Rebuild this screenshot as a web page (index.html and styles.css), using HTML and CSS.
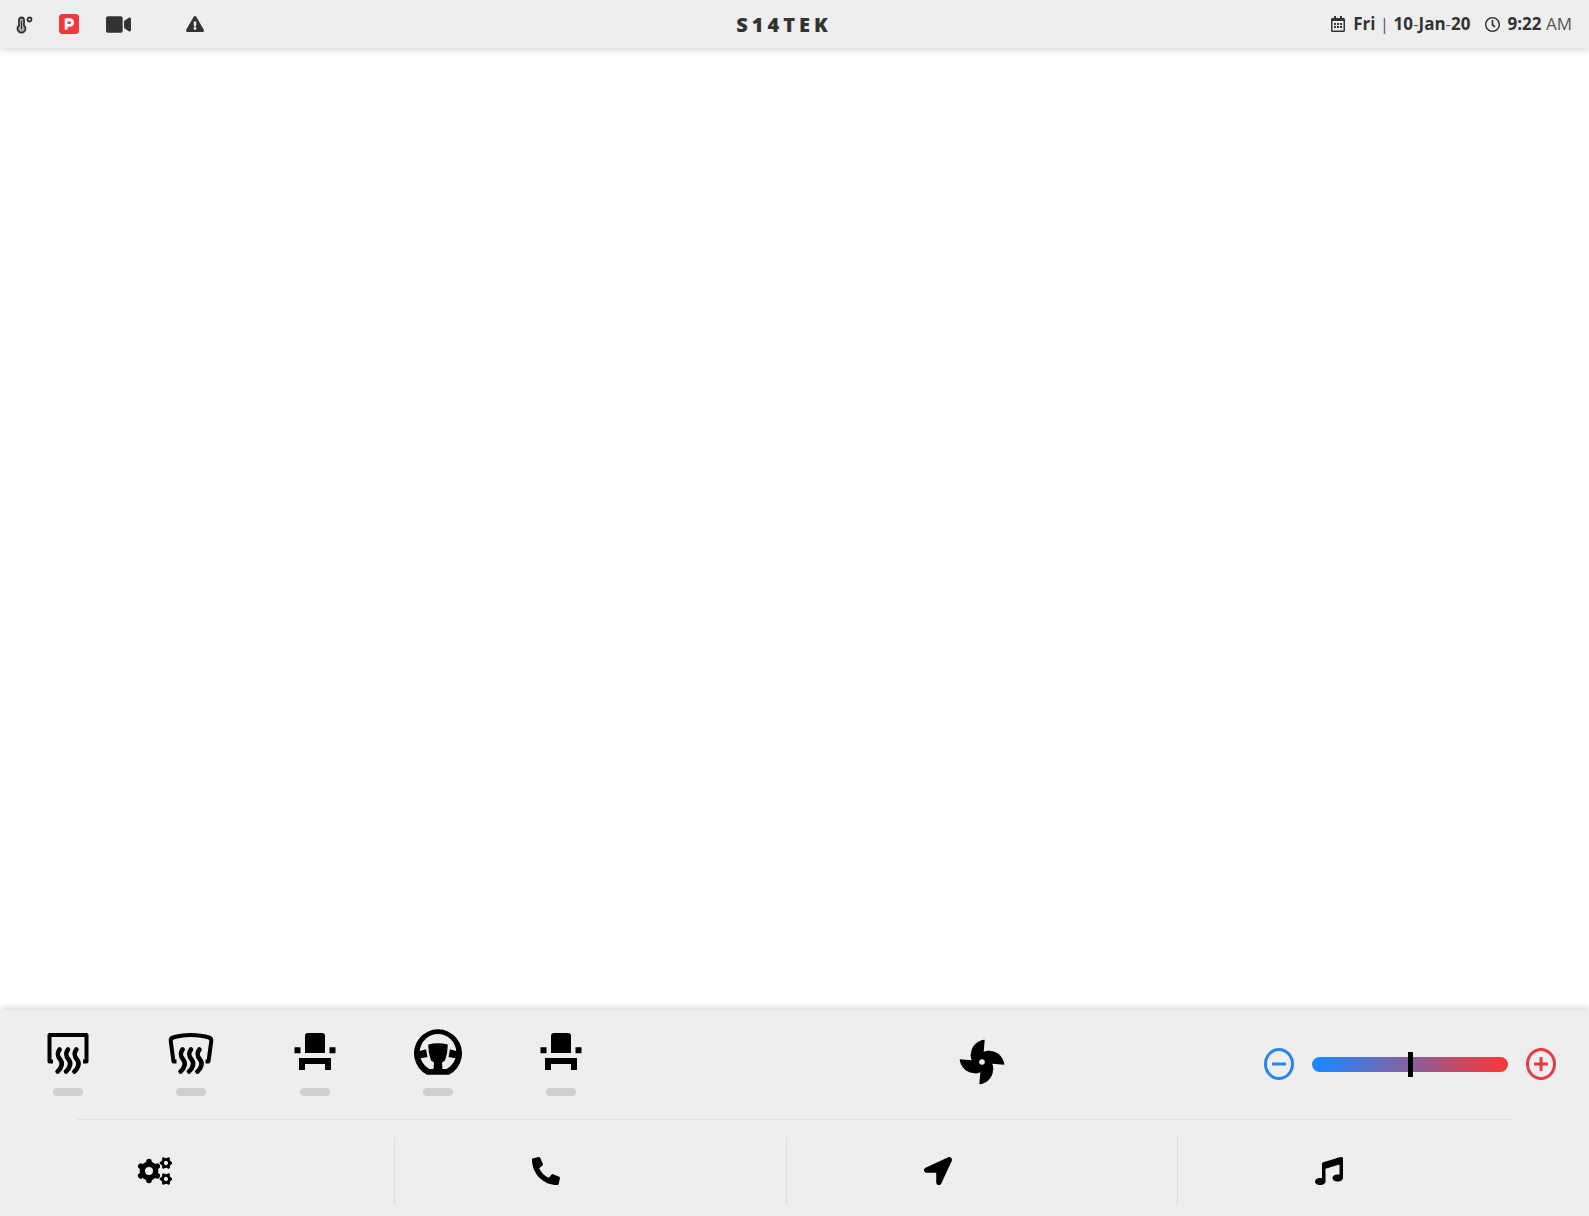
FILE: index.html
```html
<!DOCTYPE html>
<html lang="en">
<head>
<meta charset="utf-8">
<meta name="viewport" content="width=device-width, initial-scale=1">
<title>S14TEK</title>
<link rel="stylesheet" href="styles.css">
</head>
<body>
<header class="topbar">
  <div class="status">
    <svg class="icon-temp" viewBox="0 0 16 18" aria-hidden="true"><path d="M2.500 9.500V4a2.500 2.500 0 0 1 5 0v5.500a4 4 0 1 1-5 0z" fill="#aaa" stroke="currentColor" stroke-width="1.800"/><path d="M5 5v8" stroke="currentColor" stroke-width="1"/><circle cx="13" cy="3.500" r="2" fill="none" stroke="currentColor" stroke-width="1.800"/></svg>
    <svg class="icon-park" viewBox="0 32 448 448" aria-hidden="true"><path d="M400 32H48C21.500 32 0 53.500 0 80v352c0 26.500 21.500 48 48 48h352c26.500 0 48-21.500 48-48V80c0-26.500-21.500-48-48-48zM240 320h-48v48c0 8.800-7.200 16-16 16h-32c-8.800 0-16-7.200-16-16V144c0-8.800 7.200-16 16-16h96c52.900 0 96 43.100 96 96s-43.100 96-96 96zm0-128h-48v64h48c17.600 0 32-14.400 32-32s-14.400-32-32-32z"/></svg>
    <svg class="icon-video" viewBox="0 64 576 384" aria-hidden="true"><path d="M336.200 64H47.800C21.400 64 0 85.400 0 111.800v288.400C0 426.600 21.400 448 47.800 448h288.400c26.400 0 47.800-21.400 47.800-47.800V111.800c0-26.400-21.400-47.800-47.800-47.800zm189.400 37.700L416 177.300v157.400l109.600 75.500c21.200 14.600 50.400-.3 50.400-25.800V127.500c0-25.400-29.100-40.400-50.400-25.800z"/></svg>
    <svg class="icon-warn" viewBox="0 0 576 512" aria-hidden="true"><path d="M569.517 440.013C587.975 472.007 564.806 512 527.940 512H48.054c-36.937 0-59.999-40.055-41.577-71.987L246.423 23.985c18.467-32.009 64.720-31.951 83.154 0l239.940 416.028zM288 354c-25.405 0-46 20.595-46 46s20.595 46 46 46 46-20.595 46-46-20.595-46-46-46zm-43.673-165.346l7.418 136c.347 6.364 5.609 11.346 11.982 11.346h48.546c6.373 0 11.635-4.982 11.982-11.346l7.418-136c.375-6.874-5.098-12.654-11.982-12.654h-63.383c-6.884 0-12.356 5.780-11.981 12.654z"/></svg>
  </div>
  <h1 class="brand">S14TEK</h1>
  <div class="datetime">
    <svg class="icon-cal" viewBox="0 0 448 512" aria-hidden="true"><path d="M148 288h-40c-6.600 0-12-5.400-12-12v-40c0-6.600 5.400-12 12-12h40c6.600 0 12 5.400 12 12v40c0 6.600-5.400 12-12 12zm108-12v-40c0-6.600-5.400-12-12-12h-40c-6.600 0-12 5.400-12 12v40c0 6.600 5.400 12 12 12h40c6.600 0 12-5.400 12-12zm96 0v-40c0-6.600-5.400-12-12-12h-40c-6.600 0-12 5.400-12 12v40c0 6.600 5.400 12 12 12h40c6.600 0 12-5.400 12-12zm-96 96v-40c0-6.600-5.400-12-12-12h-40c-6.600 0-12 5.400-12 12v40c0 6.600 5.400 12 12 12h40c6.600 0 12-5.400 12-12zm-96 0v-40c0-6.600-5.400-12-12-12h-40c-6.600 0-12 5.400-12 12v40c0 6.600 5.400 12 12 12h40c6.600 0 12-5.400 12-12zm192 0v-40c0-6.600-5.400-12-12-12h-40c-6.600 0-12 5.400-12 12v40c0 6.600 5.400 12 12 12h40c6.600 0 12-5.400 12-12zm96-260v352c0 26.500-21.500 48-48 48H48c-26.500 0-48-21.500-48-48V112c0-26.500 21.500-48 48-48h48V12c0-6.600 5.400-12 12-12h40c6.600 0 12 5.400 12 12v52h128V12c0-6.600 5.400-12 12-12h40c6.600 0 12 5.400 12 12v52h48c26.500 0 48 21.500 48 48zm-48 346V160H48v298c0 3.300 2.700 6 6 6h340c3.300 0 6-2.700 6-6z"/></svg>
    <span class="date"><b>Fri</b> | <b>10</b>-<b>Jan</b>-<b>20</b></span>
    <svg class="icon-clock" viewBox="8 8 496 496" aria-hidden="true"><path d="M256 8C119 8 8 119 8 256s111 248 248 248 248-111 248-248S393 8 256 8zm0 448c-110.500 0-200-89.500-200-200S145.500 56 256 56s200 89.500 200 200-89.500 200-200 200zm61.800-104.400l-84.900-61.700c-3.100-2.300-4.900-5.900-4.900-9.700V116c0-6.600 5.400-12 12-12h32c6.600 0 12 5.400 12 12v141.700l66.800 48.600c5.400 3.900 6.500 11.400 2.600 16.800L334.600 349c-3.900 5.300-11.400 6.500-16.800 2.600z"/></svg>
    <span class="time"><b>9:22</b> AM</span>
  </div>
</header>
<main class="screen"></main>
<footer class="dock">
  <div class="climate">
    <div class="heaters">
      <button class="heater" type="button" aria-label="Rear defrost">
        <svg class="heater-icon" viewBox="0 0 48 48"><g fill="none" stroke="currentColor" stroke-width="4" stroke-linejoin="round"><path d="M9 33.500H5.500V7h37v26.500H39"/><path id="heat" stroke-width="4.600" stroke-linecap="round" d="M15.600 21.500C12 26 14 29 16.500 32S17.500 40 13.600 43.500M24 21.500c-3.600 4.500-1.600 7.500.9 10.500s1 8-2.900 11.500M32.400 21.500c-3.600 4.500-1.600 7.500.9 10.500s1 8-2.900 11.500"/></g></svg>
        <span class="level"></span>
      </button>
      <button class="heater" type="button" aria-label="Front defrost">
        <svg class="heater-icon" viewBox="0 0 48 48"><g fill="none" stroke="currentColor" stroke-width="4" stroke-linejoin="round"><path d="M9.500 33.500H6.500L3.800 13.500Q3.300 10.500 6 9.500C16 6 32 6 42 9.500Q44.700 10.500 44.200 13.500L41.500 33.500H38.500"/><use href="#heat"/></g></svg>
        <span class="level"></span>
      </button>
      <button class="heater" type="button" aria-label="Left seat heater">
        <svg class="heater-icon" viewBox="0 0 48 48"><path id="seat" d="M17 5h14q3 0 3 3v17h-20V8q0-3 3-3zM3.500 19.300H9.500v6H3.500zM38.500 19.300h6v6h-6zM8 30h32v12h-6v-6h-20v6h-6z"/></svg>
        <span class="level"></span>
      </button>
      <button class="heater" type="button" aria-label="Steering wheel heater">
        <svg class="heater-icon" viewBox="0 0 48 48"><path fill-rule="evenodd" d="M13 46.700A24 24 0 1 1 35 46.700zM24 6A18.500 18.500 0 0 0 5.800 23L12 21.300 13.500 29 6.500 30.200Q9.300 37.500 15.500 41H19.500L20 34.500 17 32.500Q14 25 14.300 16.500Q24 14 33.700 16.500Q34 25 31 32.500L28 34.500 28.500 41H32.500Q38.700 37.500 41.500 30.200L34.500 29 36 21.300 42.200 23A18.500 18.500 0 0 0 24 6z"/></svg>
        <span class="level"></span>
      </button>
      <button class="heater" type="button" aria-label="Right seat heater">
        <svg class="heater-icon" viewBox="0 0 48 48"><use href="#seat"/></svg>
        <span class="level"></span>
      </button>
    </div>
    <div class="fan">
      <button class="fan-button" type="button" aria-label="Fan">
        <svg class="fan-icon" viewBox="-23 -23 46 46"><defs><path id="blade" d="M2.700-22.300C-4-22-11-16-11-8Q-11-4-10-1.500L0 0 8-11.500Q4-11.500 1.700-10z"/></defs><use href="#blade"/><use href="#blade" transform="rotate(90)"/><use href="#blade" transform="rotate(180)"/><use href="#blade" transform="rotate(270)"/><circle r="6" /><circle r="2.800" fill="#eee"/></svg>
      </button>
    </div>
    <div class="temperature">
      <button class="step cooler" type="button" aria-label="Cooler"><svg class="step-icon" viewBox="0 0 14 14"><path d="M0 7h14" /></svg></button>
      <input class="range" type="range" min="0" max="100" value="50" aria-label="Temperature">
      <button class="step warmer" type="button" aria-label="Warmer"><svg class="step-icon" viewBox="0 0 14 14"><path d="M0 7h14M7 0v14" /></svg></button>
    </div>
  </div>
  <nav class="nav">
    <a class="nav-link" href="#settings" aria-label="Settings"><svg class="icon-gears" viewBox="0 0 36 28"><defs><g id="gear" fill="none" stroke="currentColor"><circle r="6.700" stroke-width="5.400"/><path id="teeth" d="M0-9.500v1.600M0 9.500v-1.600" stroke-width="5.600" stroke-linecap="round"/><use href="#teeth" transform="rotate(60)"/><use href="#teeth" transform="rotate(120)"/></g></defs><use href="#gear" transform="translate(13 14)"/><use href="#gear" transform="translate(30 6) rotate(30) scale(.52)"/><use href="#gear" transform="translate(30 22) rotate(30) scale(.52)"/></svg></a>
    <a class="nav-link" href="#phone" aria-label="Phone"><svg class="nav-icon" viewBox="0 0 512 512"><path transform="translate(512 0) scale(-1 1)" d="M493.400 24.600l-104-24c-11.300-2.600-22.900 3.300-27.500 13.900l-48 112c-4.200 9.800-1.400 21.300 6.900 28l60.600 49.600c-36 76.700-98.900 140.500-177.200 177.200l-49.600-60.600c-6.800-8.300-18.200-11.100-28-6.900l-112 48C3.900 366.500-2 378.100.6 389.400l24 104C27.100 504.200 36.700 512 48 512c256.100 0 464-207.500 464-464 0-11.200-7.700-20.900-18.600-23.400z"/></svg></a>
    <a class="nav-link" href="#navigation" aria-label="Navigation"><svg class="nav-icon" viewBox="0 0 512 512"><path d="M444.520 3.520L28.740 195.420c-47.970 22.390-31.980 92.750 19.190 92.750h175.910v175.910c0 51.170 70.360 67.170 92.750 19.190l191.900-415.780c15.990-38.390-25.590-79.970-63.970-63.970z"/></svg></a>
    <a class="nav-link" href="#music" aria-label="Music"><svg class="nav-icon" viewBox="0 0 512 512"><path d="M511.990 32.010c0-21.710-21.100-37.010-41.600-30.510L150.400 96c-13.300 4.200-22.400 16.500-22.400 30.500v261.420c-10.050-2.380-20.720-3.920-32-3.920-53.020 0-96 28.650-96 64s42.980 64 96 64 96-28.650 96-64V214.310l256-75.020v184.630c-10.050-2.380-20.720-3.920-32-3.920-53.020 0-96 28.650-96 64s42.980 64 96 64 96-28.650 96-64l-.01-351.990z"/></svg></a>
  </nav>
</footer>
</body>
</html>
```
FILE: styles.css
```css
* { box-sizing: border-box; }

body {
  margin: 0;
  min-height: 100vh;
  display: flex;
  flex-direction: column;
  background: #fff;
  color: #333;
  font: 17px/24px "Open Sans", "Noto Sans", sans-serif;
}

svg { display: block; flex: none; fill: currentColor; }

button {
  padding: 0;
  border: 0;
  background: none;
  color: inherit;
  cursor: pointer;
}

.topbar {
  display: grid;
  grid-template-columns: 1fr auto 1fr;
  align-items: center;
  height: 48px;
  padding: 0 17px 0 16px;
  background: #eee;
  box-shadow: 0 1px 8px rgba(0, 0, 0, .2);
}

.status { display: flex; align-items: center; }
.icon-temp { width: 17px; height: 18px; margin: 2px 26px 0 0; }
.icon-park { width: 20px; height: 20px; margin-right: 27px; color: #f03a40; background: #fff; border-radius: 3px; }
.icon-video { width: 25px; height: 17px; margin-right: 55px; }
.icon-warn { width: 18px; height: 16px; }

.brand {
  margin: 2px 20px 0 0;
  font-size: 20px;
  font-weight: 800;
  line-height: 24px;
  letter-spacing: 4px;
}

.datetime { display: flex; align-items: center; justify-content: flex-end; color: #555; }
.datetime svg, .datetime b { color: #333; }
.icon-cal { width: 14px; height: 16px; margin-right: 8px; }
.icon-clock { width: 15px; height: 15px; margin: 0 8px 0 14px; }

.screen { flex: 1; }

.dock {
  background: #eee;
  color: #000;
  box-shadow: 0 -1px 8px rgba(0, 0, 0, .2);
}

.climate { display: flex; height: 109px; }

.heaters {
  display: flex;
  width: 44%;
  padding: 18px 76px 0 6px;
}

.heater {
  flex: 1;
  display: flex;
  flex-direction: column;
  align-items: center;
  gap: 12px;
}

.heater-icon { width: 48px; height: 48px; }
.level { width: 30px; height: 8px; border-radius: 4px; background: #d0d0d0; }

.fan { flex: 1; display: flex; align-items: center; justify-content: center; padding-bottom: 5px; }
.fan-icon { width: 46px; height: 46px; }

.temperature { display: flex; align-items: center; gap: 18px; padding: 0 33px 1px 0; }

.step {
  display: grid;
  place-items: center;
  width: 30px;
  height: 32px;
  border: 3px solid;
  border-radius: 50%;
}

.step-icon { width: 14px; height: 14px; stroke: currentColor; stroke-width: 3; }
.cooler { color: #2a84ee; }
.warmer { color: #e83a44; }

.range {
  appearance: none;
  width: 196px;
  height: 15px;
  margin: 0;
  border-radius: 8px;
  background: linear-gradient(to right, #2086ff 5%, #f23a3c 95%);
}

.range::-webkit-slider-thumb {
  appearance: none;
  width: 5px;
  height: 25px;
  background: #000;
}

.nav {
  display: grid;
  grid-template-columns: repeat(4, 1fr);
  height: 97px;
  margin: 0 19px 0 3px;
  position: relative;
}

.nav::before {
  content: "";
  position: absolute;
  top: 0;
  left: 74px;
  right: 58px;
  height: 1px;
  background: #e0e0e0;
}

.nav-link {
  display: flex;
  align-items: center;
  height: 68px;
  margin-top: 18px;
  padding-left: 34%;
  border-right: 1px solid #dcdcdc;
  color: #000;
}

.nav-link:last-child { border-right: 0; }
.nav-icon { width: 28px; height: 28px; margin-left: 4px; }
.icon-gears { width: 36px; height: 28px; }
```
